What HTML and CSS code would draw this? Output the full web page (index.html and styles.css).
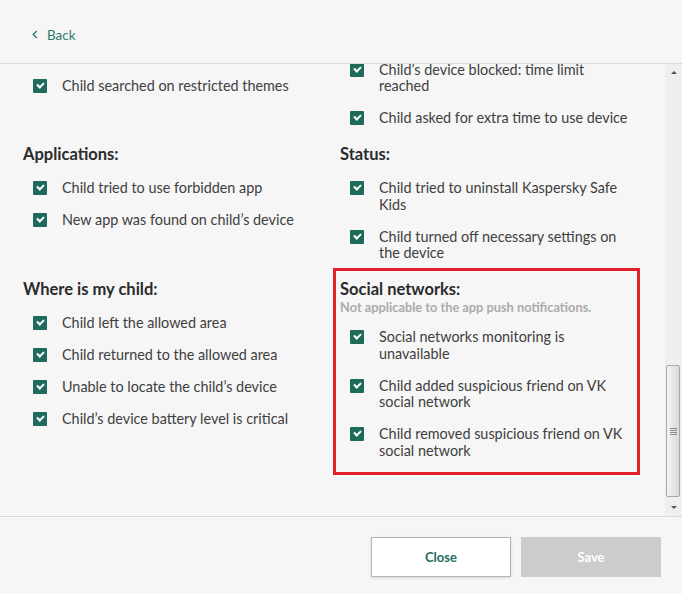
FILE: index.html
```html
<!DOCTYPE html>
<html lang="en">
<head>
    <meta charset="UTF-8">
    <meta name="viewport" content="width=device-width, initial-scale=1.0">
    <title>Notification settings</title>
    <link rel="stylesheet" href="styles.css">
</head>
<body>
    <div class="dialog">
        <header class="top">
            <a class="back" href="#">
                <svg class="chev" width="6" height="9" viewBox="0 0 6 9"><polyline points="4.8,1 1.2,4.5 4.8,8" fill="none" stroke="#2f7d6d" stroke-width="1.4"/></svg>
                <span>Back</span>
            </a>
        </header>

        <div class="body">
            <div class="viewport">
                <div class="groups">
                    <!-- tails of the sections scrolled out of view -->
                    <section class="group short">
                        <div class="item"><span class="box"></span><span class="label">Child searched on restricted themes</span></div>
                    </section>
                    <section class="group">
                        <div class="item"><span class="box"></span><span class="label">Child’s device blocked: time limit reached</span></div>
                        <div class="item"><span class="box"></span><span class="label">Child asked for extra time to use device</span></div>
                    </section>

                    <section class="group">
                        <h3>Applications:</h3>
                        <div class="item"><span class="box"></span><span class="label">Child tried to use forbidden app</span></div>
                        <div class="item"><span class="box"></span><span class="label">New app was found on child’s device</span></div>
                    </section>
                    <section class="group">
                        <h3>Status:</h3>
                        <div class="item"><span class="box"></span><span class="label">Child tried to uninstall Kaspersky Safe Kids</span></div>
                        <div class="item"><span class="box"></span><span class="label">Child turned off necessary settings on the device</span></div>
                    </section>

                    <section class="group">
                        <h3>Where is my child:</h3>
                        <div class="item"><span class="box"></span><span class="label">Child left the allowed area</span></div>
                        <div class="item"><span class="box"></span><span class="label">Child returned to the allowed area</span></div>
                        <div class="item"><span class="box"></span><span class="label">Unable to locate the child’s device</span></div>
                        <div class="item"><span class="box"></span><span class="label">Child’s device battery level is critical</span></div>
                    </section>
                    <section class="group marked">
                        <h3>Social networks:</h3>
                        <p class="sub">Not applicable to the app push notifications.</p>
                        <div class="item"><span class="box"></span><span class="label">Social networks monitoring is unavailable</span></div>
                        <div class="item"><span class="box"></span><span class="label">Child added suspicious friend on VK social network</span></div>
                        <div class="item"><span class="box"></span><span class="label">Child removed suspicious friend on VK social network</span></div>
                    </section>
                </div>
            </div>

            <div class="scrollbar">
                <div class="sb-btn"><span class="arrow-up"></span></div>
                <div class="sb-track">
                    <div class="sb-thumb"><span class="grip"></span></div>
                </div>
                <div class="sb-btn"><span class="arrow-down"></span></div>
            </div>
        </div>

        <footer class="actions">
            <button class="btn btn-close">Close</button>
            <button class="btn btn-save" disabled>Save</button>
        </footer>
    </div>
</body>
</html>
```

FILE: styles.css
```css
body {
    margin: 0;
    background-color: #f6f6f6;
    font-family: Lato, "Open Sans", sans-serif;
    color: #404040;
}
.dialog {
    width: 682px;
    height: 594px;
    display: flex;
    flex-direction: column;
}
.top {
    height: 63px;
    border-bottom: 1px solid #dadada;
    display: flex;
    align-items: center;
    padding-left: 32px;
    box-sizing: content-box;
}
.back {
    display: flex;
    align-items: center;
    gap: 9px;
    color: #2f7d6d;
    font-size: 13.5px;
    line-height: 18px;
    text-decoration: none;
    margin-top: 6px;
}
.body {
    height: 452px;
    display: flex;
}
.viewport {
    flex: 1;
    overflow: hidden;
    display: flex;
    flex-direction: column;
    justify-content: flex-end;
}
.groups {
    flex-shrink: 0;
    display: grid;
    grid-template-columns: 295px 295px;
    column-gap: 22px;
    row-gap: 16px;
    align-items: start;
    padding: 0 0 57px 23px;
}
.group.short {
    align-self: end;
    margin-bottom: 32px;
}
.group h3 {
    margin: 0;
    font-size: 16.5px;
    line-height: 22px;
    font-weight: bold;
    color: #2b2b2b;
}
.group .sub {
    margin: 0;
    font-size: 12.8px;
    line-height: 14px;
    font-weight: bold;
    color: #ababab;
}
.item {
    display: flex;
    margin-top: 15.5px;
    padding-left: 10px;
    font-size: 14.4px;
    line-height: 16.5px;
}
.box {
    flex: 0 0 14px;
    height: 14px;
    margin: 1px 15px 0 0;
    border-radius: 1px;
    background-color: #1e6b5c;
    position: relative;
}
.box::after {
    content: "";
    position: absolute;
    left: 4px;
    top: 3px;
    width: 5px;
    height: 3px;
    border-left: 2px solid #fff;
    border-bottom: 2px solid #fff;
    transform: rotate(-45deg);
}
.marked {
    position: relative;
}
.marked::after {
    content: "";
    position: absolute;
    top: -9.5px;
    left: -7px;
    right: -5px;
    bottom: -16px;
    border: 3px solid #e0212b;
    pointer-events: none;
}
.scrollbar {
    width: 17px;
    background-color: #efefef;
    display: flex;
    flex-direction: column;
}
.sb-btn {
    height: 17px;
    display: flex;
    align-items: center;
    justify-content: center;
}
.arrow-up {
    border-left: 3px solid transparent;
    border-right: 3px solid transparent;
    border-bottom: 3px solid #555;
}
.arrow-down {
    border-left: 3px solid transparent;
    border-right: 3px solid transparent;
    border-top: 3px solid #555;
}
.sb-track {
    flex: 1;
    display: flex;
    flex-direction: column;
    justify-content: flex-end;
    padding: 0 2px 2px 1px;
}
.sb-thumb {
    height: 130px;
    border: 1px solid #a9a9a9;
    border-radius: 2px;
    background: linear-gradient(to right, #f3f3f3, #dadada);
    display: flex;
    align-items: center;
    justify-content: center;
}
.grip {
    width: 7px;
    height: 7px;
    background: repeating-linear-gradient(to bottom, #8c8c8c 0, #8c8c8c 1px, transparent 1px, transparent 2px);
}
.actions {
    flex: 1;
    border-top: 1px solid #d8d8d8;
    display: flex;
    justify-content: flex-end;
    align-items: flex-start;
    gap: 10px;
    padding: 20px 21px 0 0;
}
.btn {
    width: 140px;
    height: 40px;
    font-family: Lato, "Open Sans", sans-serif;
    font-size: 13px;
    font-weight: bold;
    border-radius: 0;
    cursor: pointer;
}
.btn-close {
    background-color: #fff;
    border: 1px solid #b3b3b3;
    color: #1e6b5c;
    box-shadow: 0 1px 3px rgba(0, 0, 0, 0.12);
}
.btn-save {
    background-color: #cccccc;
    border: none;
    color: #fff;
}
```
